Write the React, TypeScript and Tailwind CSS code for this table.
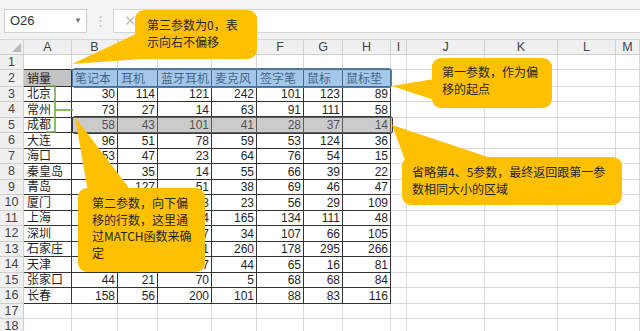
import React from "react";

type Cell = string | number;

const letters = ["", "A", "B", "C", "D", "E", "F", "G", "H", "I", "J", "K", "L", "M"];

// cells hidden under the callout are left blank
const table: Cell[][] = [
    ["销量", "笔记本", "耳机", "蓝牙耳机", "麦克风", "签字笔", "鼠标", "鼠标垫"],
    ["北京", 30, 114, 121, 242, 101, 123, 89],
    ["常州", 73, 27, 14, 63, 91, 111, 58],
    ["成都", 58, 43, 101, 41, 28, 37, 14],
    ["大连", 96, 51, 78, 59, 53, 124, 36],
    ["海口", 53, 47, 23, 64, 76, 54, 15],
    ["秦皇岛", "", 35, 14, 55, 66, 39, 22],
    ["青岛", "", 127, 51, 38, 69, 46, 47],
    ["厦门", "", "", 93, 23, 56, 29, 109],
    ["上海", "", "", 64, 165, 134, 111, 48],
    ["深圳", "", "", 27, 34, 107, 66, 105],
    ["石家庄", "", "", 81, 260, 178, 295, 266],
    ["天津", "", "", 47, 44, 65, 16, 81],
    ["张家口", 44, 21, 70, 5, 68, 68, 84],
    ["长春", 158, 56, 200, 101, 88, 83, 116],
];

// row 1..18
const rowHeights = [
    "h-[15px]", "h-[17px]", "h-[15px]", "h-[16px]", "h-[15px]", "h-[16px]",
    "h-[15px]", "h-[16px]", "h-[15px]", "h-[16px]", "h-[15px]", "h-[16px]",
    "h-[15px]", "h-[16px]", "h-[15px]", "h-[16px]", "h-[15px]", "h-[16px]",
];

const gridCols =
    "grid grid-cols-[24px_48px_46px_40px_54px_45px_47px_39px_48px_16px_78px_73px_58px_24px]";

function cellBorder(row: number, col: number) {
    const inTable = row >= 2 && row <= 16 && col >= 1 && col <= 8;
    if (inTable) return "border-r border-b border-[#333]";
    if (row === 1 && col >= 1 && col <= 8) return "border-r border-b border-r-[#dadada] border-b-[#333]";
    return "border-r border-b border-[#dadada]";
}

function Bubble({ className, lines }: { className: string; lines: string[] }) {
    return (
        <div
            className={`absolute rounded-[9px] bg-[#ffc000] text-[12px] leading-[16.5px] text-[#262626] font-['Noto_Sans_CJK_SC',sans-serif] ${className}`}
        >
            {lines.map((l) => (
                <div key={l} className="whitespace-nowrap">{l}</div>
            ))}
        </div>
    );
}

export default function App() {
    return (
        <div className="relative w-[640px] h-[331px] overflow-hidden bg-white font-['Liberation_Sans','Noto_Sans_CJK_SC',sans-serif]">
            {/* formula bar */}
            <div className="h-[40px] bg-[#f3f3f3] flex items-start pt-[9px] border-b border-[#d6d6d6]">
                <div className="ml-[4px] w-[83px] h-[24px] bg-white border border-[#cfcfcf] flex items-center justify-between pl-[5px] pr-[4px]">
                    <span className="text-[13px] text-[#333]">O26</span>
                    <span className="text-[8px] text-[#707070]">▼</span>
                </div>
                <div className="w-[26px] h-[24px] flex items-center justify-center text-[13px] text-[#bdbdbd]">⋮</div>
                <div className="flex-1 h-[24px] bg-white border-l border-t border-b border-[#d6d6d6] flex items-center pl-[10px]">
                    <span className="text-[15px] text-[#c2c2c2]">✕</span>
                </div>
            </div>

            {/* column headers */}
            <div className={`${gridCols} h-[15px] bg-[#f0f0f0]`}>
                {letters.map((l, i) => (
                    <div
                        key={i}
                        className="relative border-r border-b border-[#d0d0d0] flex items-center justify-center text-[12.5px] leading-none text-[#444]"
                    >
                        {i === 0 ? (
                            <svg className="absolute right-[2px] bottom-[2px]" width="9" height="9" viewBox="0 0 9 9">
                                <polygon points="9,0 9,9 0,9" fill="#b9b9b9" />
                            </svg>
                        ) : (
                            l
                        )}
                    </div>
                ))}
            </div>

            {/* rows */}
            {rowHeights.map((h, r) => {
                const row = r + 1;
                const data = row >= 2 && row <= 16 ? table[row - 2] : null;
                return (
                    <div key={row} className={`${gridCols} ${h}`}>
                        <div className="bg-[#f0f0f0] border-r border-b border-[#d0d0d0] flex items-center justify-center text-[12.5px] leading-none text-[#444]">
                            {row}
                        </div>
                        {letters.slice(1).map((_, c) => {
                            const col = c + 1;
                            const v = data && col <= 8 ? data[col - 1] : "";
                            const isNum = typeof v === "number";
                            const fill = row === 2 && col === 1 ? "bg-[#c3c3c3]" : "";
                            return (
                                <div
                                    key={col}
                                    className={`${cellBorder(row, col)} ${fill} flex items-end overflow-hidden whitespace-nowrap text-[12px] leading-[14px] text-[#1f1f1f] ${
                                        isNum ? "justify-end pr-[2px]" : "justify-start pl-[3px]"
                                    }`}
                                >
                                    {v}
                                </div>
                            );
                        })}
                    </div>
                );
            })}

            {/* highlight shapes */}
            <div className="absolute left-[72px] top-[68px] w-[320px] h-[20px] rounded-[3px] border border-[#4f7fae] bg-[#5b9bd5]/55" />
            <div className="absolute left-[72px] top-[116px] w-[321px] h-[18px] rounded-[3px] border-[1.5px] border-[#3a3a3a] bg-[#8c8c8c]/45" />

            {/* pointers and bracket */}
            <svg className="absolute left-0 top-0 pointer-events-none" width="640" height="331" viewBox="0 0 640 331">
                <polyline points="46,86 55,86 55,132 46,132" fill="none" stroke="#70ad47" strokeWidth="1.6" />
                <line x1="55" y1="110" x2="73" y2="110" stroke="#70ad47" strokeWidth="1.6" />
                <polygon points="72,64 138,33 170,57" fill="#ffc000" />
                <polygon points="392,86 434,79 434,100" fill="#ffc000" />
                <polygon points="392,125 405,160 497,160" fill="#ffc000" />
                <polygon points="75,117 88,192 132,192" fill="#ffc000" />
            </svg>

            <Bubble className="left-[135px] top-[10px] w-[122px] h-[49px] pl-[12px] pt-[7px]" lines={["第三参数为0，表", "示向右不偏移"]} />
            <Bubble className="left-[432px] top-[58px] w-[120px] h-[50px] pl-[10px] pt-[6px]" lines={["第一参数，作为偏", "移的起点"]} />
            <Bubble className="left-[402px] top-[157px] w-[220px] h-[48px] pl-[10px] pt-[7px]" lines={["省略第4、5参数，最终返回跟第一参", "数相同大小的区域"]} />
            <Bubble className="left-[78px] top-[188px] w-[127px] h-[84px] pl-[14px] pt-[7px]" lines={["第二参数，向下偏", "移的行数，这里通", "过MATCH函数来确", "定"]} />
        </div>
    );
}
